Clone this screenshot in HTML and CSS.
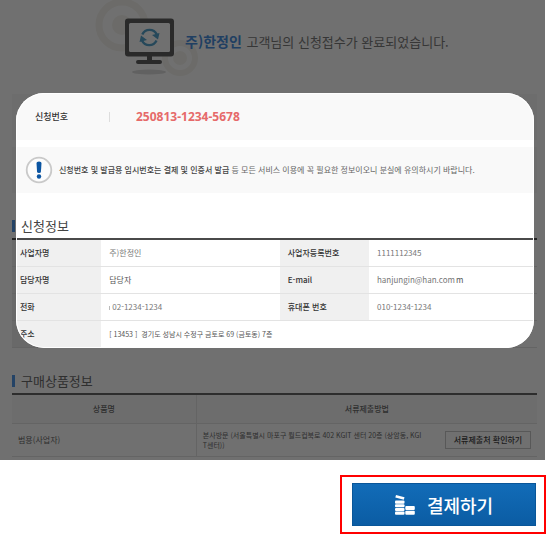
FILE: index.html
```html
<!DOCTYPE html>
<html lang="ko">
<head>
    <meta charset="utf-8">
    <title>신청접수 완료</title>
    <meta name="viewport" content="width=device-width, initial-scale=1">
    <link rel="stylesheet" href="styles.css">
</head>
<body>

<main class="sheet">
    <div class="done">
        <svg class="done-icon" width="110" height="80" viewBox="0 0 110 80" aria-hidden="true">
            <g fill="none" stroke="#f5f4ef">
                <circle cx="27" cy="25" r="23" stroke-width="7"/>
                <circle cx="85" cy="58" r="15" stroke-width="6"/>
            </g>
            <g fill="#f5f4ef">
                <circle cx="27" cy="25" r="10"/>
                <circle cx="85" cy="58" r="7"/>
            </g>
            <ellipse cx="54" cy="72" rx="17" ry="2.5" fill="#dcdcdc"/>
            <rect x="30" y="18.500" width="49" height="38" rx="3" fill="#606060"/>
            <rect x="34" y="23" width="41" height="29" rx="1.500" fill="#fff"/>
            <path d="M52 56h5v4h8q2 0 2 2t-2 2H43q-2 0-2-2t2-2h9z" fill="#606060"/>
            <g fill="none" stroke="#57a5cd" stroke-width="2.400">
                <path d="M47.300 34.500a8 8 0 0 1 14.500 0"/>
                <path d="M47 40.500a8 8 0 0 0 14.500 0"/>
            </g>
            <path d="M57 35l7.500-2-1.500 6.500zM52 40l-7.500 2 1.500-6.500z" fill="#57a5cd"/>
        </svg>
        <p class="done-text"><strong>주)한정인</strong> 고객님의 신청접수가 완료되었습니다.</p>
    </div>

    <div class="receipt">
        <span class="receipt-label">신청번호</span>
        <strong class="receipt-no">250813-1234-5678</strong>
    </div>

    <div class="notice">
        <svg width="28" height="28" viewBox="0 0 28 28" aria-hidden="true">
            <circle cx="14" cy="14" r="12.300" fill="#fcfcfc" stroke="#c9c9c9" stroke-width="1.800"/>
            <path d="M11.500 7q0-1.500 2.500-1.500t2.500 1.500l-.6 9q-.1 1-1.900 1t-1.900-1z" fill="#0b55a2"/>
            <circle cx="14" cy="20.500" r="2.200" fill="#0b55a2"/>
        </svg>
        <p><strong>신청번호 및 발급용 임시번호는 결제 및 인증서 발급</strong> 등 모든 서비스 이용에 꼭 필요한 정보이오니 분실에 유의하시기 바랍니다.</p>
    </div>

    <h2 class="title">신청정보</h2>
    <table class="info">
        <colgroup>
            <col class="col-th"><col class="col-td"><col class="col-th"><col>
        </colgroup>
        <tr>
            <th scope="row">사업자명</th>
            <td>주)한정인</td>
            <th scope="row">사업자등록번호</th>
            <td>1111112345</td>
        </tr>
        <tr>
            <th scope="row">담당자명</th>
            <td class="dark">담당자</td>
            <th scope="row">E-mail</th>
            <td>hanjungin@han.com<span class="rest">m</span></td>
        </tr>
        <tr>
            <th scope="row">전화</th>
            <td><span class="tick"></span>02-1234-1234</td>
            <th scope="row">휴대폰 번호</th>
            <td>010-1234-1234</td>
        </tr>
        <tr>
            <th scope="row">주소</th>
            <td class="dark address" colspan="3">[ 13453 ]&nbsp; 경기도 성남시 수정구 금토로 69 (금토동) 7층</td>
        </tr>
    </table>

    <h2 class="title title-goods">구매상품정보</h2>
    <table class="goods">
        <colgroup><col class="col-name"><col></colgroup>
        <thead>
            <tr><th scope="col">상품명</th><th scope="col">서류제출방법</th></tr>
        </thead>
        <tbody>
            <tr>
                <td>범용(사업자)</td>
                <td>
                    <div class="visit">
                        <span class="address">본사방문 (서울특별시 마포구 월드컵북로 402 KGIT 센터 20층 (상암동, KGIT센터))</span>
                        <button type="button" class="btn-place">서류제출처 확인하기</button>
                    </div>
                </td>
            </tr>
        </tbody>
    </table>
    <div class="spotlight"></div>
</main>

<div class="actions">
    <div class="mark">
        <button type="button" class="btn-pay">
            <svg width="20" height="20" viewBox="0 0 20 20" fill="#fff" aria-hidden="true">
                <path d="M1 0l8.500 2.200-.7 2.600L.3 2.600z"/>
                <rect y="5.500" width="9.500" height="3.200" rx="1"/>
                <rect y="9.300" width="9.500" height="3" rx="1"/>
                <rect y="12.900" width="9.500" height="3" rx="1"/>
                <rect y="16.500" width="9.500" height="3.200" rx="1"/>
                <rect x="10.300" y="11" width="9.500" height="4" rx="1"/>
                <rect x="10.300" y="15.700" width="9.500" height="4" rx="1"/>
            </svg>
            결제하기
        </button>
    </div>
</div>

</body>
</html>
```

FILE: styles.css
```css
* {
    box-sizing: border-box;
}
body {
    margin: 0;
    background: #fff;
    color: #555;
    font-family: "Noto Sans CJK KR", sans-serif;
    font-size: 8px;
    line-height: 10px;
}
p, h2 {
    margin: 0;
}
button {
    font-family: inherit;
    cursor: pointer;
}

.sheet {
    position: relative;
    overflow: hidden;
    margin-right: 4px;
    padding: 0 8px 3px 12px;
}

/* dims everything around the receipt and the applicant info */
.spotlight {
    position: absolute;
    top: 93px;
    right: 11px;
    left: 16px;
    height: 255px;
    border-radius: 28px;
    box-shadow: 0 0 0 600px rgba(0, 0, 0, .56), inset 0 0 0 1px #fff;
    pointer-events: none;
}

.done {
    display: flex;
    align-items: flex-start;
    height: 94px;
    padding-left: 83px;
}
.done-icon {
    flex: none;
}
.done-text {
    padding-top: 31px;
    margin-left: -20px;
    color: #7c7c7c;
    font-size: 13px;
    line-height: 20px;
}
.done-text strong {
    margin-right: 1px;
    color: #4a8fe0;
    font-size: 14px;
}

.receipt {
    display: flex;
    align-items: center;
    height: 46px;
    margin-bottom: 7px;
    padding-left: 23px;
    background: #f9f9f9;
}
.receipt-label {
    width: 75px;
    border-right: 1px solid #ddd;
    color: #333;
    font-size: 9px;
    font-weight: 500;
}
.receipt-no {
    padding-left: 26px;
    color: #e66a6a;
    font-family: "Noto Sans", sans-serif;
    font-size: 12px;
}

.notice {
    display: flex;
    align-items: center;
    gap: 6px;
    height: 46px;
    margin-bottom: 24px;
    padding-left: 13px;
    background: #f9f9f9;
    color: #666;
}
.notice strong {
    color: #444;
    font-weight: 500;
}

.title {
    display: flex;
    align-items: center;
    gap: 6px;
    height: 17px;
    margin-bottom: 4px;
    color: #444;
    font-size: 13px;
    font-weight: 400;
}
.title::before {
    width: 3px;
    height: 12px;
    background: #5299e8;
    content: "";
}
.title-goods {
    color: #6c6c6c;
}

table {
    width: 100%;
    border-collapse: separate;
    border-spacing: 0;
    border-top: 2px solid #4a4a4a;
    table-layout: fixed;
}
th, td {
    padding: 0 8px;
    border-bottom: 1px solid #e3e3e3;
    text-align: left;
}
.info {
    margin-bottom: 24px;
}
.info th, .info td {
    height: 27px;
}
.info th {
    background: #f0f0f0;
    color: #333;
    font-weight: 500;
}
.info td {
    color: #777;
}
.info td.dark {
    color: #555;
}
.col-th {
    width: 17%;
}
.col-td {
    width: 34%;
}
.rest {
    margin-left: 1px;
    color: #555;
}
.tick {
    display: inline-block;
    width: 1px;
    height: 4px;
    margin-right: 2px;
    background: #bbb;
}
.address {
    font-size: 7px;
    word-break: break-all;
}

.goods {
    border-top-color: #666;
    color: #6c6c6c;
}
.col-name {
    width: 35%;
}
.goods th {
    height: 29px;
    background: #f9f9f9;
    font-weight: 500;
    text-align: center;
}
.goods td {
    height: 33px;
    padding: 0 6px;
}
.goods th + th, .goods td + td {
    border-left: 1px solid #e3e3e3;
}
.visit {
    display: flex;
    align-items: center;
    justify-content: space-between;
    gap: 20px;
}
.btn-place {
    flex: none;
    width: 86px;
    height: 18px;
    padding: 0;
    border: 1px solid #c8c8c8;
    background: #fff;
    color: #444;
    font-size: 8px;
    font-weight: 500;
    line-height: 14px;
}

.actions {
    display: flex;
    justify-content: flex-end;
    padding: 15px 3px 0 0;
}
.mark {
    padding: 6px 8px 6px 10px;
    border: 2px solid #f00;
}
.btn-pay {
    display: flex;
    align-items: center;
    justify-content: center;
    gap: 12px;
    width: 184px;
    height: 43px;
    padding: 0;
    border: 1px solid #095699;
    background: linear-gradient(#126cb8, #0b5ca3);
    color: #fff;
    font-size: 18px;
    font-weight: 500;
    line-height: 24px;
}
```
